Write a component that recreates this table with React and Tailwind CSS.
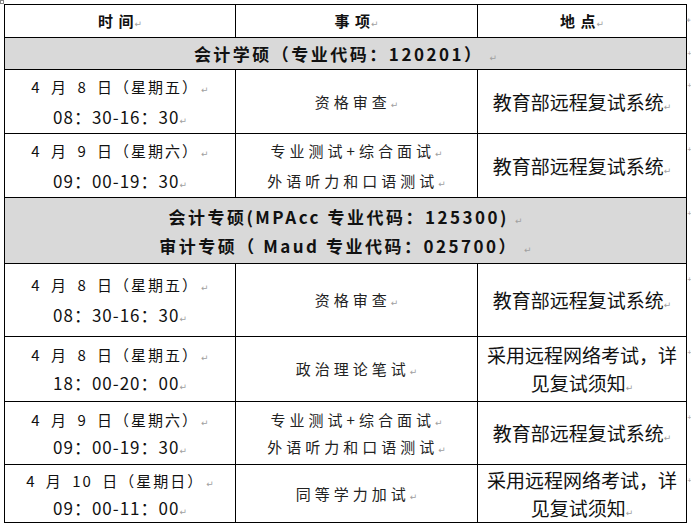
const cjk = "font-['Noto_Sans_CJK_SC','Noto_Sans',sans-serif]"

function Mark({ className = '' }) {
  return (
    <span className={`font-['DejaVu_Sans'] text-[9px] leading-none font-normal tracking-normal text-[#a0a0a0] ${className}`}>
      ↵
    </span>
  )
}

function RowEnd() {
  return (
    <span className="absolute -right-[6px] top-[12px] font-['DejaVu_Sans'] text-[6px] leading-none text-[#a0a0a0]">+</span>
  )
}

function DateCell({ date, time, lh }) {
  return (
    <td className="border border-black text-center align-middle">
      <div className={`text-[15px] ${lh} tracking-[2px] [word-spacing:4px] text-[#111]`}>
        {date}
        <Mark className="ml-[2px]" />
      </div>
      <div className={`text-[17px] ${lh} tracking-[1px] text-[#111]`}>
        {time}
        <Mark />
      </div>
    </td>
  )
}

function ItemCell({ lines, lh }) {
  return (
    <td className="border border-black text-center align-middle">
      {lines.map((l, i) => (
        <div key={i} className={`text-[15px] ${lh} tracking-[4px] text-[#222]`}>
          {l}
          <Mark />
        </div>
      ))}
    </td>
  )
}

function PlaceCell({ text }) {
  return (
    <td className="relative border border-black px-[4px] text-center align-middle">
      <div className="text-[19px] leading-[28px] text-[#111]">
        {text}
        <Mark />
      </div>
      <RowEnd />
    </td>
  )
}

function Section({ h, lines }) {
  return (
    <tr className={h}>
      <td colSpan={3} className="relative border border-black bg-[#d9d9d9] text-center align-middle">
        {lines.map((l, i) => (
          <div key={i} className="text-[17px] font-bold leading-[29px] tracking-[2.5px] text-[#111]">
            {l}
            <Mark className="ml-[6px]" />
          </div>
        ))}
        <RowEnd />
      </td>
    </tr>
  )
}

function Row({ r }) {
  return (
    <tr className={r.h}>
      <DateCell date={r.date} time={r.time} lh={r.lh} />
      <ItemCell lines={r.item} lh={r.lh} />
      <PlaceCell text={r.place} />
    </tr>
  )
}

const rowsA = [
  { h: 'h-[64px]', lh: 'leading-[30px]', date: '4 月 8 日（星期五）', time: '08：30-16：30', item: ['资格审查'], place: '教育部远程复试系统' },
  { h: 'h-[64px]', lh: 'leading-[30px]', date: '4 月 9 日（星期六）', time: '09：00-19：30', item: ['专业测试+综合面试', '外语听力和口语测试'], place: '教育部远程复试系统' },
]

const rowsB = [
  { h: 'h-[73px]', lh: 'leading-[30px]', date: '4 月 8 日（星期五）', time: '08：30-16：30', item: ['资格审查'], place: '教育部远程复试系统' },
  { h: 'h-[65px]', lh: 'leading-[28px]', date: '4 月 8 日（星期五）', time: '18：00-20：00', item: ['政治理论笔试'], place: '采用远程网络考试，详见复试须知' },
  { h: 'h-[63px]', lh: 'leading-[27px]', date: '4 月 9 日（星期六）', time: '09：00-19：30', item: ['专业测试+综合面试', '外语听力和口语测试'], place: '教育部远程复试系统' },
  { h: 'h-[58px]', lh: 'leading-[27px]', date: '4 月 10 日（星期日）', time: '09：00-11：00', item: ['同等学力加试'], place: '采用远程网络考试，详见复试须知' },
]

export default function App() {
  return (
    <div className={`relative w-[691px] h-[527px] overflow-hidden bg-white pt-[4px] pl-[4px] ${cjk}`}>
      <div className="absolute left-0 top-0 w-[4px] h-[4px] border border-[#888]" />
      <table className="table-fixed border-collapse w-[682px]">
        <colgroup>
          <col className="w-[231px]" />
          <col className="w-[242px]" />
          <col className="w-[209px]" />
        </colgroup>
        <tbody>
          <tr className="h-[33px]">
            {['时 间', '事 项', '地 点'].map((t, i) => (
              <td key={t} className="relative border border-black text-center align-middle text-[15px] font-bold tracking-[1px] text-[#111]">
                {t}
                <Mark />
                {i === 2 && <RowEnd />}
              </td>
            ))}
          </tr>
          <Section h="h-[32px]" lines={['会计学硕（专业代码：120201）']} />
          {rowsA.map((r, i) => (
            <Row key={i} r={r} />
          ))}
          <Section h="h-[66px]" lines={['会计专硕(MPAcc 专业代码：125300)', '审计专硕（ Maud 专业代码：025700）']} />
          {rowsB.map((r, i) => (
            <Row key={i} r={r} />
          ))}
        </tbody>
      </table>
    </div>
  )
}
